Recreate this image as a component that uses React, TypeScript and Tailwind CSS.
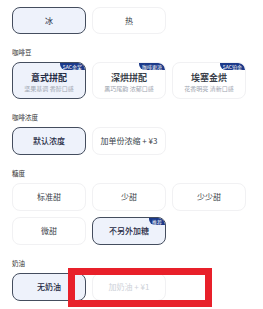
import type { ReactNode } from 'react'

const font = { fontFamily: '"Noto Sans CJK SC", "Noto Sans", sans-serif' }

function Label({ children }: { children: ReactNode }) {
  return <p className="mt-[14px] mb-[6px] text-[6.5px] leading-[8px] text-[#333]">{children}</p>
}

function Opt({
  children,
  active,
  badge,
  h = 'h-[28px]',
  faded,
}: {
  children: ReactNode
  active?: boolean
  badge?: string
  h?: string
  faded?: boolean
}) {
  return (
    <div
      className={`relative flex w-[74px] ${h} flex-col items-center justify-center overflow-hidden rounded-[8px] border ${
        active ? 'border-[#444d5e] bg-[#eef2fb] text-[#1f2a44]' : 'border-[#f1f1f3] bg-white text-[#3a3f4a]'
      } ${faded ? 'text-[#cdd1d8]' : ''}`}
    >
      {badge && (
        <span className="absolute right-0 top-0 rounded-bl-[6px] rounded-tr-[6px] bg-[#1c3a8a] px-[3px] text-[5px] leading-[7px] text-white">
          {badge}
        </span>
      )}
      {children}
    </div>
  )
}

function Bean({ title, sub, badge, active }: { title: string; sub: string; badge: string; active?: boolean }) {
  return (
    <Opt active={active} badge={badge} h="h-[37px]">
      <span className="mt-[3px] text-[9px] font-semibold leading-[11px]">{title}</span>
      <span className="mt-[2px] text-[6px] leading-[8px] text-[#a0a6b0]">{sub}</span>
    </Opt>
  )
}

export default function App() {
  return (
    <div className="relative h-[309px] w-[263px] overflow-hidden bg-white px-[12px] pt-[7px]" style={font}>
      <div className="flex gap-[6px] text-[8px]">
        <Opt active h="h-[27px]">冰</Opt>
        <Opt h="h-[27px]">热</Opt>
      </div>

      <Label>咖啡豆</Label>
      <div className="flex gap-[6px]">
        <Bean active title="意式拼配" sub="坚果基调 香醇口感" badge="SAC金奖" />
        <Bean title="深烘拼配" sub="黑巧尾韵 浓郁口感" badge="咖啡更浓" />
        <Bean title="埃塞金烘" sub="花香明亮 清新口感" badge="SAC铂金" />
      </div>

      <Label>咖啡浓度</Label>
      <div className="flex gap-[6px] text-[8px]">
        <Opt active>
          <span className="font-medium">默认浓度</span>
        </Opt>
        <Opt>加单份浓缩 + ¥3</Opt>
      </div>

      <Label>糖度</Label>
      <div className="grid grid-cols-[74px_74px_74px] gap-[6px] text-[8px]">
        <Opt>标准甜</Opt>
        <Opt>少甜</Opt>
        <Opt>少少甜</Opt>
        <Opt>微甜</Opt>
        <Opt active badge="推荐">
          <span className="font-medium">不另外加糖</span>
        </Opt>
      </div>

      <Label>奶油</Label>
      <div className="flex gap-[6px] text-[8px]">
        <Opt active>
          <span className="font-medium">无奶油</span>
        </Opt>
        <Opt faded>加奶油 + ¥1</Opt>
      </div>

      <div className="pointer-events-none absolute left-[68px] top-[268px] h-[39px] w-[144px] border-[7px] border-[#e8202a]" />
    </div>
  )
}
